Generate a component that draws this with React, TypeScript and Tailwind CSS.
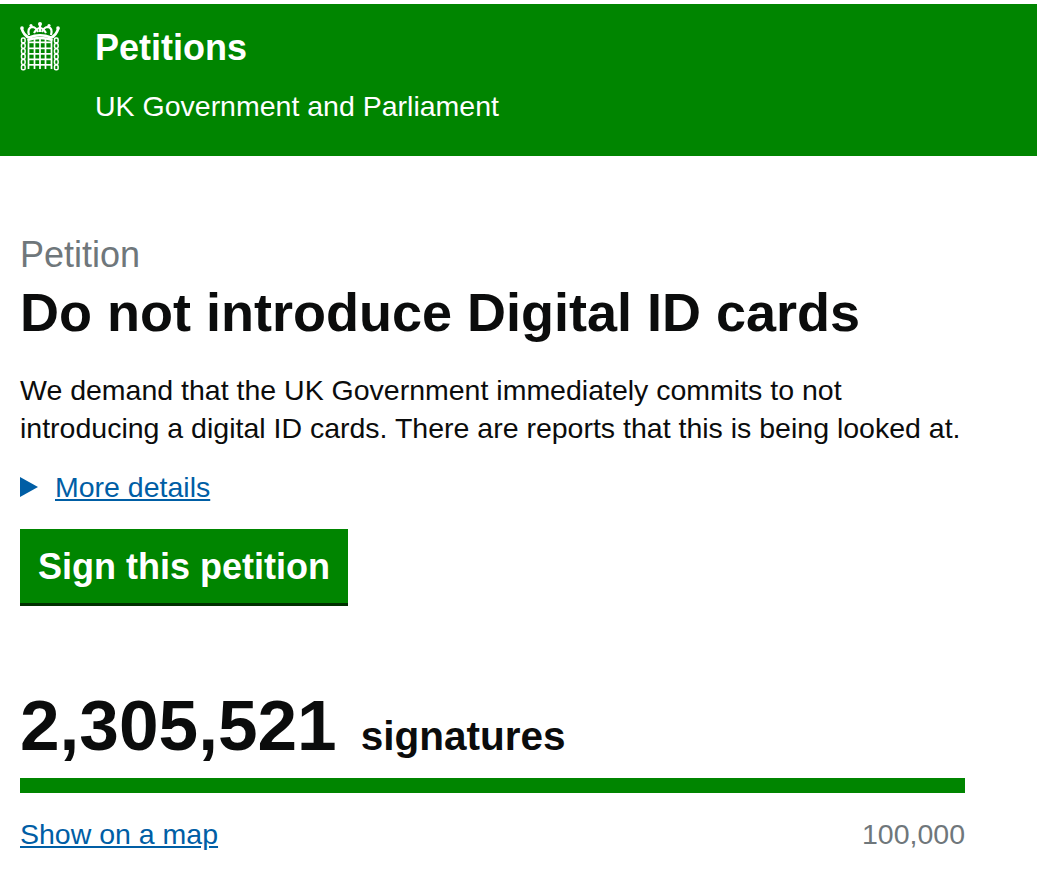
import React from 'react';

const FONT = "font-['Liberation_Sans',Arial,sans-serif]";

function Portcullis() {
  const bars = [8.5, 14.5, 20, 25.5, 31.5];
  const rails = [19.5, 25.5, 31, 36.5, 42];
  const links = [0, 1, 2, 3, 4, 5];
  return (
    <svg width="40" height="50" viewBox="0 0 40 50" className="shrink-0" fill="none">
      {/* crown */}
      <path d="M1.5 6 Q4 14 9 15.5 Q20 11 31 15.5 Q36 14 38.5 6" stroke="#fff" strokeWidth="2.6" />
      <path d="M9 13 Q7 6 12 5 Q16 5 18 10 M31 13 Q33 6 28 5 Q24 5 22 10" stroke="#fff" strokeWidth="2.2" />
      <path d="M14 11 Q20 1 26 11 M20 2 V10" stroke="#fff" strokeWidth="2.2" />
      <circle cx="20" cy="2" r="2" fill="#fff" />
      <circle cx="2" cy="6" r="1.8" fill="#fff" />
      <circle cx="38" cy="6" r="1.8" fill="#fff" />
      <circle cx="11" cy="3.5" r="1.6" fill="#fff" />
      <circle cx="29" cy="3.5" r="1.6" fill="#fff" />
      {/* gate */}
      <path d="M7.5 18 Q20 14 32.5 18" stroke="#fff" strokeWidth="2.4" />
      {bars.map((x) => (
        <rect key={x} x={x - 0.85} y="17" width="1.7" height="30" fill="#fff" />
      ))}
      {rails.map((y) => (
        <rect key={y} x="8" y={y} width="24" height="1.7" fill="#fff" />
      ))}
      {/* chains */}
      {links.map((i) => (
        <g key={i}>
          <rect x="1.5" y={16 + i * 5.4} width="3.6" height="4.8" rx="1.4" stroke="#fff" strokeWidth="1.5" />
          <rect x="34.5" y={16 + i * 5.4} width="3.6" height="4.8" rx="1.4" stroke="#fff" strokeWidth="1.5" />
        </g>
      ))}
    </svg>
  );
}

export default function App() {
  return (
    <main className={`min-h-[869px] bg-white text-[#0b0c0c] ${FONT}`}>
      {/* Header */}
      <div className="pt-1">
        <header className="h-[152px] bg-[#008500] text-white flex pl-5 pt-[18px]">
          <Portcullis />
          <div className="ml-[35px] pt-px">
            <div className="text-[36px] leading-[50px] font-bold">Petitions</div>
            <div className="text-[28.5px] leading-[30px] mt-[18px]">UK Government and Parliament</div>
          </div>
        </header>
      </div>

      <div className="px-5 w-[985px]">
        {/* Heading */}
        <div className="text-[36px] leading-10 text-[#6f777b] mt-[79px]">Petition</div>
        <h1 className="text-[54px] leading-[64px] font-bold mt-[5px]">Do not introduce Digital ID cards</h1>
        <p className="text-[28.5px] leading-[38px] mt-[27px]">
          We demand that the UK Government immediately commits to not
          <br />
          introducing a digital ID cards. There are reports that this is being looked at.
        </p>

        {/* Details */}
        <div className="flex items-center mt-[23px] h-[34px]">
          <svg width="18" height="20" viewBox="0 0 18 20" className="shrink-0">
            <path d="M0 0 L18 10 L0 20Z" fill="#005ea5" />
          </svg>
          <a href="#" className="ml-[17px] text-[28.5px] leading-[34px] text-[#005ea5] underline">More details</a>
        </div>

        {/* Button */}
        <a href="#" className="block w-[328px] h-[77px] mt-[25px] bg-[#008500] border-b-[3px] border-[#003000] text-white text-[36px] leading-[76px] font-bold text-center">
          Sign this petition
        </a>

        {/* Signatures */}
        <div className="flex items-baseline mt-[76px]">
          <span className="text-[71.2px] leading-[88px] font-bold">2,305,521</span>
          <span className="ml-6 text-[40.5px] font-bold">signatures</span>
        </div>
        <div className="h-[15px] bg-[#008500] mt-[8px]" />
        <div className="flex justify-between mt-[22px] text-[28.5px] leading-[38px]">
          <a href="#" className="text-[#005ea5] underline">Show on a map</a>
          <span className="text-[#6f777b]">100,000</span>
        </div>
      </div>
    </main>
  );
}
